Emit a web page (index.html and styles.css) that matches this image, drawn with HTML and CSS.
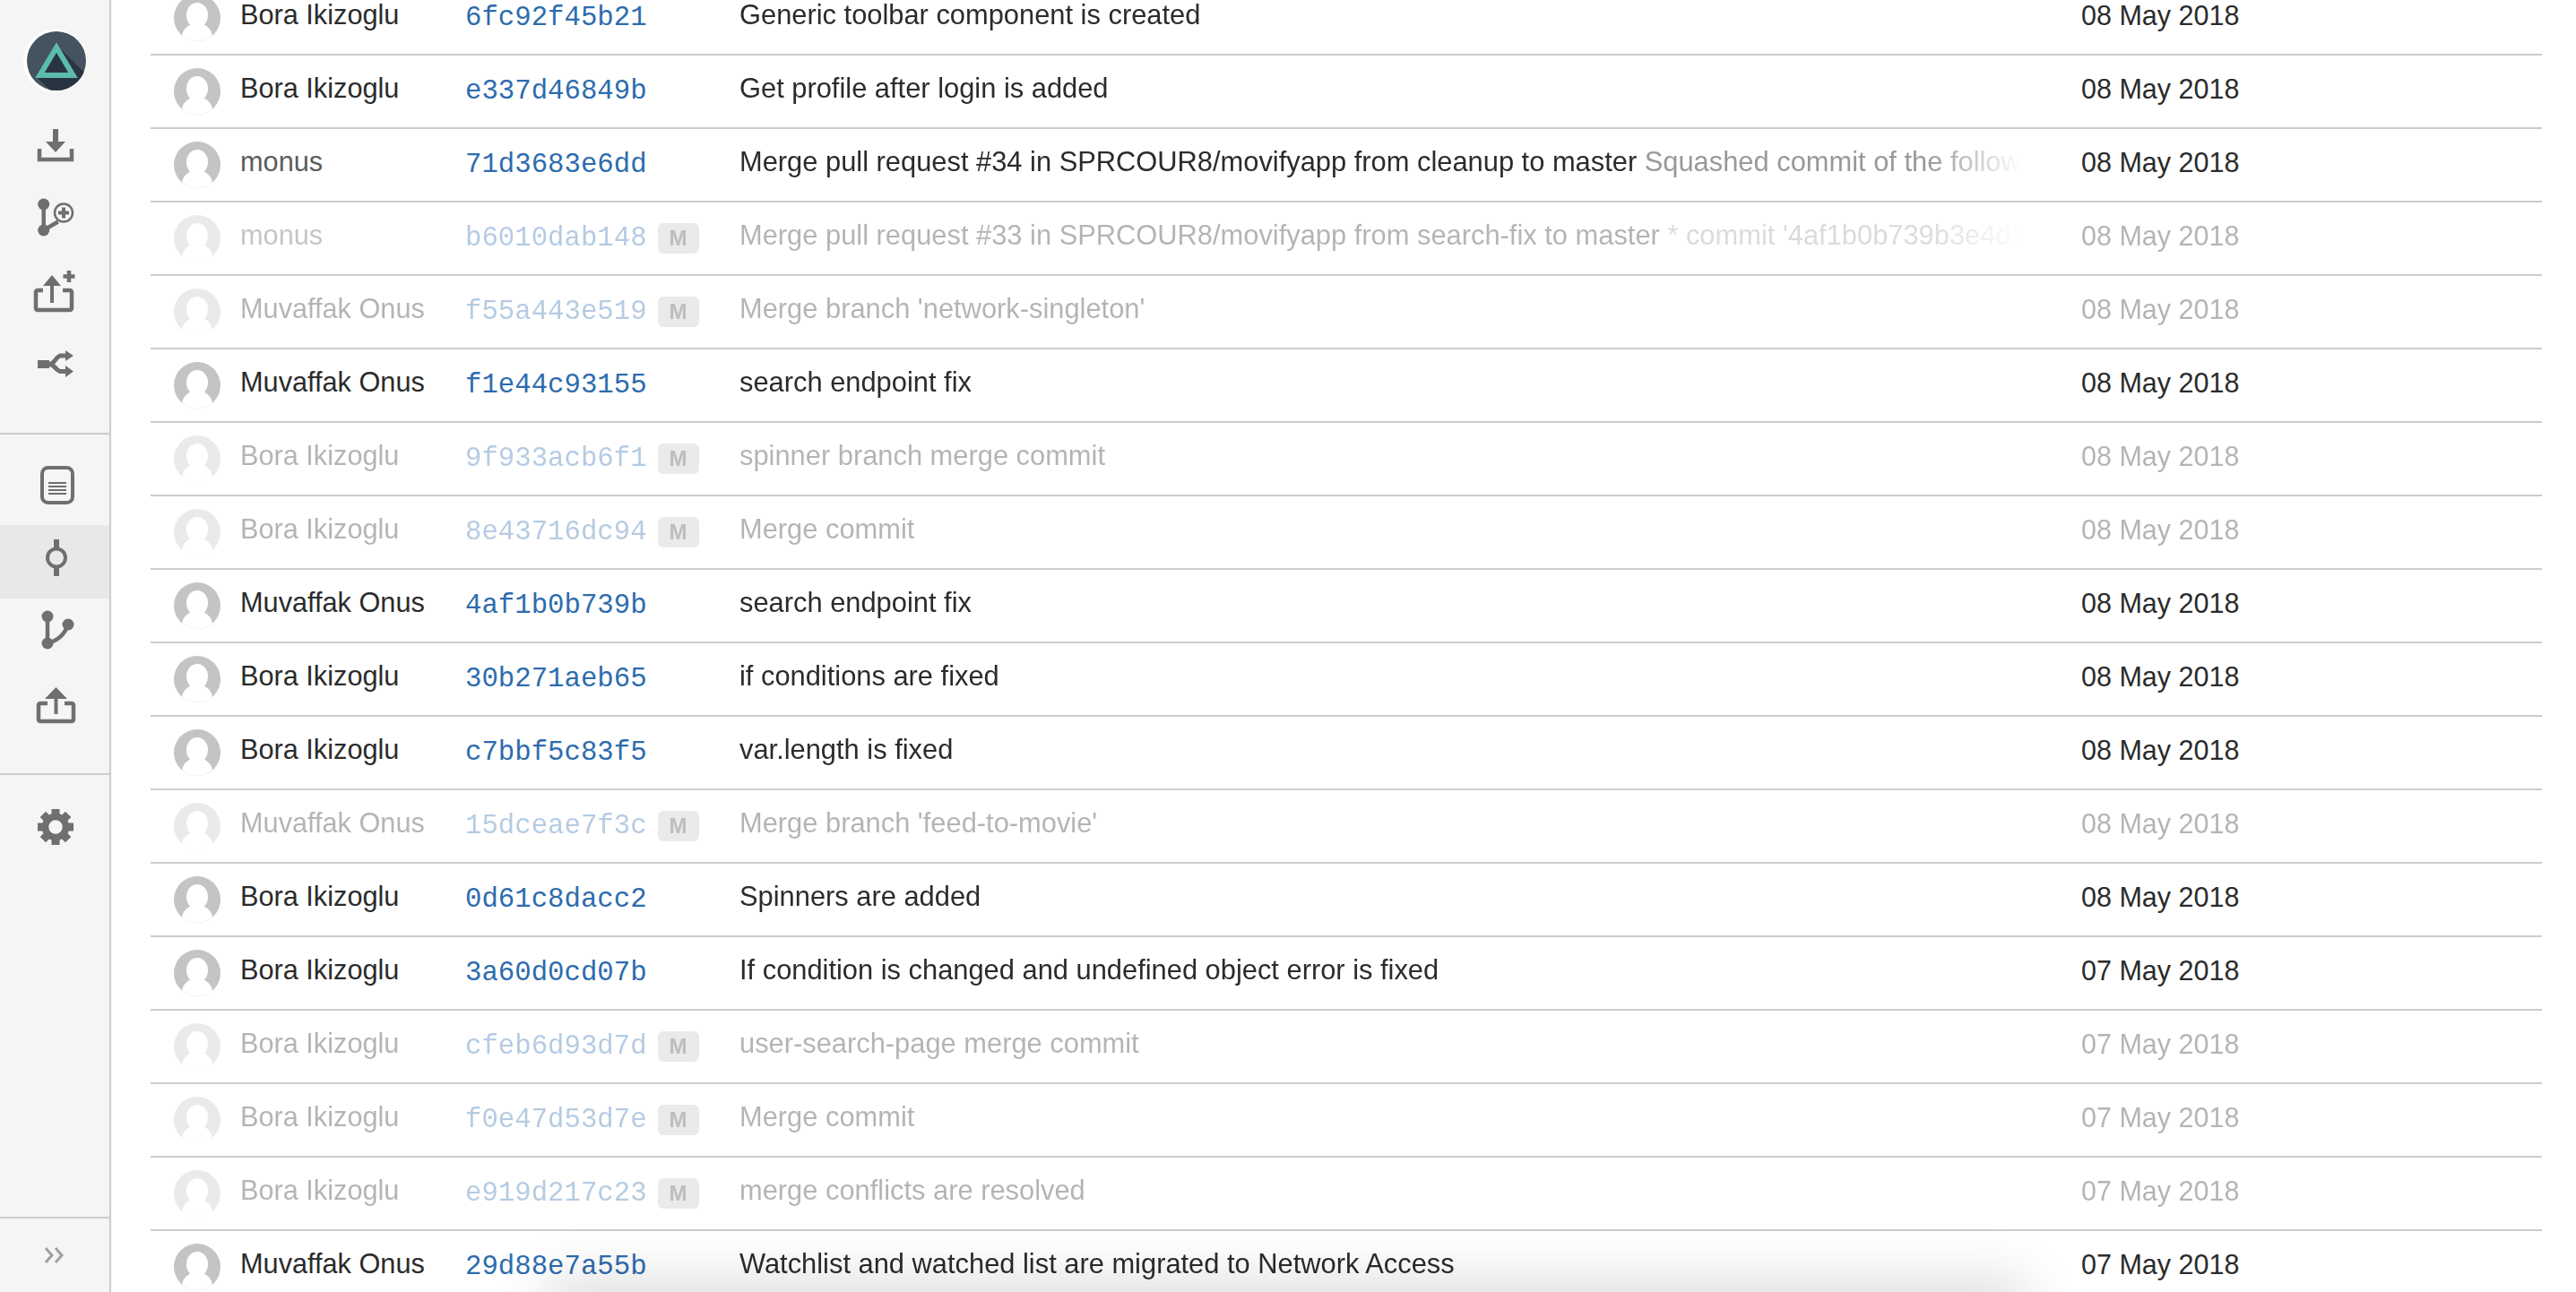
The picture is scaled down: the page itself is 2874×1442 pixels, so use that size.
FILE: index.html
```html
<!DOCTYPE html>
<html lang="en">
<head>
    <meta charset="UTF-8">
    <title>Commits</title>
    <link rel="stylesheet" href="styles.css">
</head>
<body>
    <nav class="sidebar">
        <div class="logo">
            <svg width="122" height="121" viewBox="0 0 122 121">
                <defs>
                    <clipPath id="logoClip"><circle cx="63" cy="68" r="33"/></clipPath>
                </defs>
                <circle cx="61.500" cy="68" r="35.500" fill="#fff"/>
                <circle cx="63" cy="68" r="33" fill="#45525f"/>
                <polygon clip-path="url(#logoClip)" points="63,50 123,110 101,146 41,86" fill="#2a3441"/>
                <polygon points="63,53 44.500,84 81.500,84" fill="#2a3441" stroke="#5bbcab" stroke-width="6" stroke-linejoin="miter"/>
            </svg>
        </div>
        <div class="nav-group">
            <a class="nav-item">
                <svg class="icon" viewBox="0 0 64 82">
                    <path d="M29 23h6v14h8L32 49 21 37h8z"/>
                    <path d="M14 45v12h36V45" fill="none" stroke-width="4.500"/>
                </svg>
            </a>
            <a class="nav-item">
                <svg class="icon" viewBox="0 0 64 82">
                    <circle cx="18.700" cy="25" r="6.500"/>
                    <circle cx="18.700" cy="54" r="6.500"/>
                    <path d="M18.700 25v29l16-9.500" fill="none" stroke-width="4.500"/>
                    <circle cx="41" cy="34.500" r="10" fill="#f5f5f5" stroke-width="2.500"/>
                    <path d="M41 28.500v12M35 34.500h12" fill="none" stroke-width="4"/>
                </svg>
            </a>
            <a class="nav-item">
                <svg class="icon" viewBox="0 0 64 82">
                    <path d="M18 39h-6a2 2 0 0 0-2 2v18a2 2 0 0 0 2 2h36a2 2 0 0 0 2-2V41a2 2 0 0 0-2-2h-8" fill="none" stroke-width="4.500"/>
                    <path d="M28 22 18 34h8v19h4V34h8z"/>
                    <path d="M47 17v13M40.500 23.500h13" fill="none" stroke-width="4.500"/>
                </svg>
            </a>
            <a class="nav-item">
                <svg class="icon" viewBox="0 0 64 82">
                    <path d="M12 35h13v9H12z"/>
                    <path d="M23 39.500h2c6 0 6-7 12-9.500h8M25 39.500c6 0 6 6 12 8h8" fill="none" stroke-width="5"/>
                    <path d="M43 24l9 6-9 6zM43 41l9 6.500-9 6.500z"/>
                </svg>
            </a>
        </div>
        <div class="nav-group nav-group-second">
            <a class="nav-item">
                <svg class="icon" viewBox="0 0 64 82">
                    <rect x="17" y="18" width="34" height="39" rx="6.500" fill="none" stroke-width="4"/>
                    <path d="M24 35h20M24 39h20M24 43h20M24 47h20" fill="none" stroke-width="2"/>
                </svg>
            </a>
            <a class="nav-item active">
                <svg class="icon" viewBox="0 0 64 82">
                    <path d="M33 16v10M33 47v10" fill="none" stroke-width="6"/>
                    <circle cx="33" cy="36.500" r="10" fill="none" stroke-width="4"/>
                </svg>
            </a>
            <a class="nav-item">
                <svg class="icon" viewBox="0 0 64 82">
                    <circle cx="23" cy="20" r="6.500"/>
                    <circle cx="23" cy="50" r="6.500"/>
                    <circle cx="46" cy="29" r="6.500"/>
                    <path d="M23 20v30c11-3 19-9 23-21" fill="none" stroke-width="4.500"/>
                </svg>
            </a>
            <a class="nav-item">
                <svg class="icon" viewBox="0 0 64 82">
                    <path d="M23 35h-8a2 2 0 0 0-2 2v16a2 2 0 0 0 2 2h35a2 2 0 0 0 2-2V37a2 2 0 0 0-2-2h-8" fill="none" stroke-width="4.500"/>
                    <path d="M32.500 17 20 30h10.500v17h4V30H45z"/>
                </svg>
            </a>
        </div>
        <div class="nav-group nav-group-settings">
            <a class="nav-item">
                <svg class="icon" viewBox="0 0 64 82">
                    <g transform="translate(32 41)">
                        <circle r="11.500" fill="none" stroke-width="7.500"/>
                        <rect x="-4.500" y="-20" width="9" height="7"/>
                        <rect x="-4.500" y="-20" width="9" height="7" transform="rotate(45)"/>
                        <rect x="-4.500" y="-20" width="9" height="7" transform="rotate(90)"/>
                        <rect x="-4.500" y="-20" width="9" height="7" transform="rotate(135)"/>
                        <rect x="-4.500" y="-20" width="9" height="7" transform="rotate(180)"/>
                        <rect x="-4.500" y="-20" width="9" height="7" transform="rotate(225)"/>
                        <rect x="-4.500" y="-20" width="9" height="7" transform="rotate(270)"/>
                        <rect x="-4.500" y="-20" width="9" height="7" transform="rotate(315)"/>
                    </g>
                </svg>
            </a>
        </div>
        <div class="collapse">
            <svg width="24" height="20" viewBox="0 0 24 20">
                <path d="M2 2l7 8-7 8M13 2l7 8-7 8" fill="none" stroke="#a0a0a0" stroke-width="3"/>
            </svg>
        </div>
    </nav>

    <main class="commits">
        <div class="commit-row"><span class="avatar"></span><span class="author">Bora Ikizoglu</span><span class="hash-cell"><a class="hash">6fc92f45b21</a></span><span class="subject">Generic toolbar component is created</span><span class="date">08 May 2018</span></div>
        <div class="commit-row"><span class="avatar"></span><span class="author">Bora Ikizoglu</span><span class="hash-cell"><a class="hash">e337d46849b</a></span><span class="subject">Get profile after login is added</span><span class="date">08 May 2018</span></div>
        <div class="commit-row"><span class="avatar"></span><span class="author author-soft">monus</span><span class="hash-cell"><a class="hash">71d3683e6dd</a></span><span class="subject">Merge pull request #34 in SPRCOUR8/movifyapp from cleanup to master <span class="body-text">Squashed commit of the follow</span></span><span class="date">08 May 2018</span></div>
        <div class="commit-row merge"><span class="avatar"></span><span class="author author-soft">monus</span><span class="hash-cell"><a class="hash">b6010dab148</a><span class="badge">M</span></span><span class="subject">Merge pull request #33 in SPRCOUR8/movifyapp from search-fix to master <span class="body-text">* commit '4af1b0b739b3e4d2</span></span><span class="date">08 May 2018</span></div>
        <div class="commit-row merge"><span class="avatar"></span><span class="author">Muvaffak Onus</span><span class="hash-cell"><a class="hash">f55a443e519</a><span class="badge">M</span></span><span class="subject">Merge branch 'network-singleton'</span><span class="date">08 May 2018</span></div>
        <div class="commit-row"><span class="avatar"></span><span class="author">Muvaffak Onus</span><span class="hash-cell"><a class="hash">f1e44c93155</a></span><span class="subject">search endpoint fix</span><span class="date">08 May 2018</span></div>
        <div class="commit-row merge"><span class="avatar"></span><span class="author">Bora Ikizoglu</span><span class="hash-cell"><a class="hash">9f933acb6f1</a><span class="badge">M</span></span><span class="subject">spinner branch merge commit</span><span class="date">08 May 2018</span></div>
        <div class="commit-row merge"><span class="avatar"></span><span class="author">Bora Ikizoglu</span><span class="hash-cell"><a class="hash">8e43716dc94</a><span class="badge">M</span></span><span class="subject">Merge commit</span><span class="date">08 May 2018</span></div>
        <div class="commit-row"><span class="avatar"></span><span class="author">Muvaffak Onus</span><span class="hash-cell"><a class="hash">4af1b0b739b</a></span><span class="subject">search endpoint fix</span><span class="date">08 May 2018</span></div>
        <div class="commit-row"><span class="avatar"></span><span class="author">Bora Ikizoglu</span><span class="hash-cell"><a class="hash">30b271aeb65</a></span><span class="subject">if conditions are fixed</span><span class="date">08 May 2018</span></div>
        <div class="commit-row"><span class="avatar"></span><span class="author">Bora Ikizoglu</span><span class="hash-cell"><a class="hash">c7bbf5c83f5</a></span><span class="subject">var.length is fixed</span><span class="date">08 May 2018</span></div>
        <div class="commit-row merge"><span class="avatar"></span><span class="author">Muvaffak Onus</span><span class="hash-cell"><a class="hash">15dceae7f3c</a><span class="badge">M</span></span><span class="subject">Merge branch 'feed-to-movie'</span><span class="date">08 May 2018</span></div>
        <div class="commit-row"><span class="avatar"></span><span class="author">Bora Ikizoglu</span><span class="hash-cell"><a class="hash">0d61c8dacc2</a></span><span class="subject">Spinners are added</span><span class="date">08 May 2018</span></div>
        <div class="commit-row"><span class="avatar"></span><span class="author">Bora Ikizoglu</span><span class="hash-cell"><a class="hash">3a60d0cd07b</a></span><span class="subject">If condition is changed and undefined object error is fixed</span><span class="date">07 May 2018</span></div>
        <div class="commit-row merge"><span class="avatar"></span><span class="author">Bora Ikizoglu</span><span class="hash-cell"><a class="hash">cfeb6d93d7d</a><span class="badge">M</span></span><span class="subject">user-search-page merge commit</span><span class="date">07 May 2018</span></div>
        <div class="commit-row merge"><span class="avatar"></span><span class="author">Bora Ikizoglu</span><span class="hash-cell"><a class="hash">f0e47d53d7e</a><span class="badge">M</span></span><span class="subject">Merge commit</span><span class="date">07 May 2018</span></div>
        <div class="commit-row merge"><span class="avatar"></span><span class="author">Bora Ikizoglu</span><span class="hash-cell"><a class="hash">e919d217c23</a><span class="badge">M</span></span><span class="subject">merge conflicts are resolved</span><span class="date">07 May 2018</span></div>
        <div class="commit-row"><span class="avatar"></span><span class="author">Muvaffak Onus</span><span class="hash-cell"><a class="hash">29d88e7a55b</a></span><span class="subject">Watchlist and watched list are migrated to Network Access</span><span class="date">07 May 2018</span></div>
        <div class="bottom-shadow"></div>
    </main>
</body>
</html>
```

FILE: styles.css
```css
* {
    box-sizing: border-box;
}

html, body {
    height: 100%;
}

body {
    margin: 0;
    display: flex;
    overflow: hidden;
    background: #fff;
    font-family: "Liberation Sans", Arial, sans-serif;
    font-size: 30.5px;
    color: #2b2b2b;
}

/* sidebar */
.sidebar {
    width: 124px;
    flex-shrink: 0;
    height: 100vh;
    display: flex;
    flex-direction: column;
    background: #f5f5f5;
    border-right: 2px solid #ccc;
}

.logo {
    height: 121px;
}

.logo svg {
    display: block;
}

.nav-group {
    height: 364px;
    border-bottom: 2px solid #ccc;
}

.nav-group-second {
    height: 380px;
    padding-top: 19px;
}

.nav-group-settings {
    height: auto;
    padding-top: 17px;
    border-bottom: none;
}

.nav-item {
    display: block;
    height: 82px;
}

.nav-item.active {
    background: #e8e8e8;
}

.icon {
    display: block;
    width: 64px;
    height: 82px;
    margin-left: 30px;
    fill: #6f6f6f;
    stroke: #6f6f6f;
    stroke-width: 0;
}

.collapse {
    margin-top: auto;
    height: 84px;
    border-top: 2px solid #ccc;
    display: flex;
    align-items: center;
    padding-left: 49px;
}

/* commit list */
.commits {
    flex: 1;
    min-width: 0;
    height: 100vh;
    overflow: hidden;
    position: relative;
    padding: 0 38px 0 44px;
}

.commit-row {
    height: 82px;
    display: grid;
    grid-template-columns: 74px 251px 306px 1497px 1fr;
    align-items: center;
    padding-left: 26px;
    border-bottom: 2px solid #ccc;
    white-space: nowrap;
}

.commit-row:first-child {
    margin-top: -20px;
}

.commit-row > * {
    min-width: 0;
}

.commit-row.merge > * {
    opacity: 0.35;
}

.avatar {
    display: block;
    width: 52px;
    height: 52px;
    border-radius: 50%;
    background: #c4c4c4;
    position: relative;
    overflow: hidden;
}

.avatar::before {
    content: "";
    position: absolute;
    left: 14px;
    top: 9px;
    width: 24px;
    height: 28px;
    border-radius: 50%;
    background: #fff;
}

.avatar::after {
    content: "";
    position: absolute;
    left: 9px;
    top: 32px;
    width: 34px;
    height: 30px;
    border-radius: 50%;
    background: #fff;
}

.author {
    font-size: 30.7px;
    padding-bottom: 6px;
}

.author-soft {
    color: #5c5c5c;
}

.hash-cell {
    display: flex;
    align-items: center;
    gap: 12px;
}

.hash {
    font-family: "Liberation Mono", "Courier New", monospace;
    font-size: 30.7px;
    color: #2d6cae;
    padding-bottom: 2px;
}

.badge {
    width: 46px;
    height: 34px;
    border-radius: 6px;
    background: #c4c4c4;
    color: #444;
    font-size: 24px;
    font-weight: bold;
    line-height: 34px;
    text-align: center;
}

.subject {
    font-size: 30.85px;
    overflow: hidden;
    padding-right: 66px;
    padding-bottom: 6px;
    -webkit-mask-image: linear-gradient(to right, #000 calc(100% - 170px), transparent calc(100% - 66px));
    mask-image: linear-gradient(to right, #000 calc(100% - 170px), transparent calc(100% - 66px));
}

.body-text {
    color: #999;
}

.date {
    padding-bottom: 6px;
}

.bottom-shadow {
    position: absolute;
    left: 500px;
    width: 1620px;
    bottom: -50px;
    height: 50px;
    box-shadow: 0 0 60px 16px rgba(0, 0, 0, 0.13);
    pointer-events: none;
}
```
